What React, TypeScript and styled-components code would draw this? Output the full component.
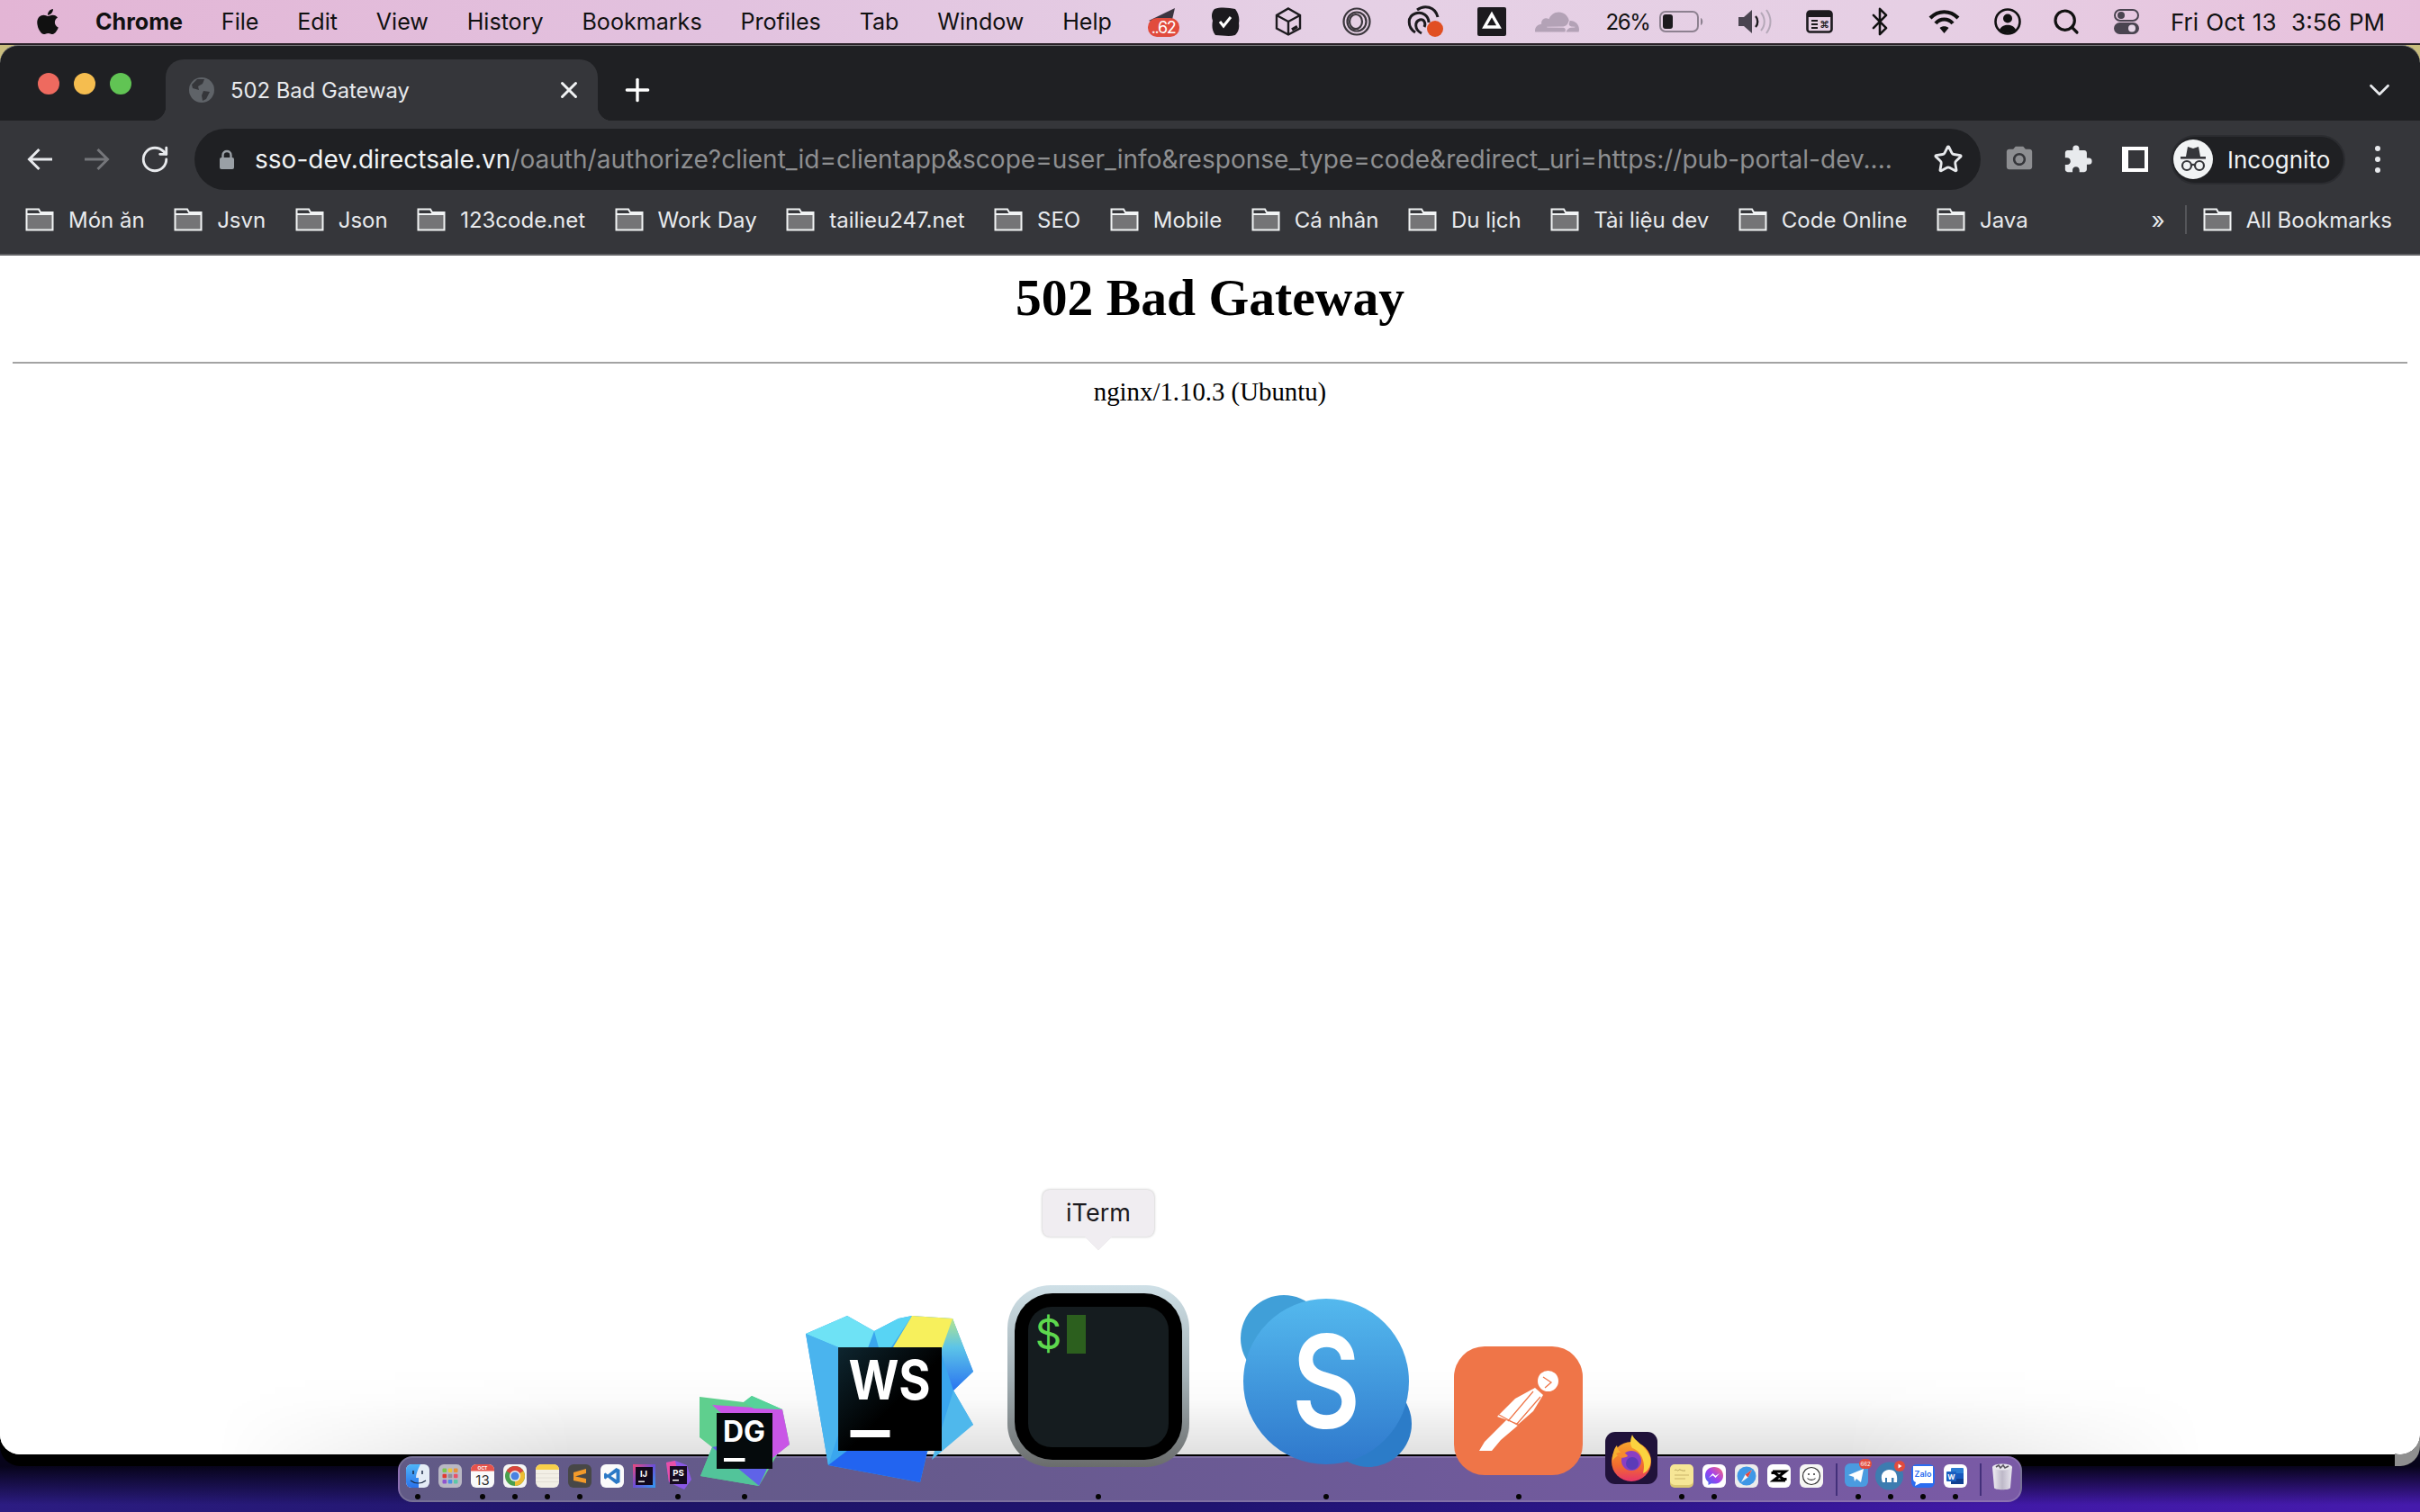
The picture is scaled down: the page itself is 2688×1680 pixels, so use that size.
import React from 'react';
import styled, { createGlobalStyle } from 'styled-components';
import { X, Plus, ChevronDown, RotateCw, Star, Search, Bluetooth } from 'lucide-react';
import { FaApple } from 'react-icons/fa';
import { MdExtension, MdPhotoCamera } from 'react-icons/md';
import { SiCloudflare } from 'react-icons/si';

const UI_FONT = `Inter, "Noto Sans", "Liberation Sans", sans-serif`;

const GlobalStyle = createGlobalStyle`
  html, body { margin: 0; padding: 0; background: #000; }
  * { box-sizing: border-box; }
`;

const Screen = styled.div`
  position: relative;
  width: 2688px;
  height: 1680px;
  overflow: hidden;
  font-family: ${UI_FONT};
  background:
    linear-gradient(to bottom, #c9bd7e 1600px, #07041a 1600px, #07041a 1629px, transparent 1672px),
    linear-gradient(90deg, #2c1c82 0%, #1e1468 28%, #1f1470 50%, #2b1688 66%, #4019a6 82%, #451aac 100%);
`;

/* ---------- mac menu bar ---------- */
const MenuBar = styled.header`
  height: 50px;
  border-bottom: 2px solid #2a2228;
  padding: 0 39px 0 37px;
  display: flex;
  align-items: center;
  background: linear-gradient(90deg, #e3b5d5 0%, #e2c2df 30%, #e5d0e5 55%, #e6cfe4 80%, #e7bfdb 100%);
  color: #111;
  font-size: 25.1px;
`;

const MenuList = styled.nav`
  display: flex;
  align-items: center;
  gap: 42.8px;
  margin-left: 37px;
`;

const MenuItem = styled.span<{ $bold?: boolean }>`
  font-weight: ${({ $bold }) => ($bold ? 700 : 400)};
`;

const Tray = styled.div`
  margin-left: auto;
  display: flex;
  align-items: center;
`;

const TraySlot = styled.span<{ $w: number; $ml: number }>`
  width: ${({ $w }) => $w}px;
  margin-left: ${({ $ml }) => $ml}px;
  display: flex;
  align-items: center;
  justify-content: center;
  white-space: nowrap;
  font-size: 24px;
  letter-spacing: -1.4px;

  svg { flex: none; }
`;

const Clock = styled.span`
  margin-left: 35px;
  font-size: 26px;
  word-spacing: 1px;
  white-space: nowrap;
`;

const TelegramStatus = () => (
  <svg width="37" height="36" viewBox="0 0 37 36">
    <path d="M2 17 L31 3 L27 20 L10 20 Z" fill="#3b3540" />
    <rect x="1" y="14" width="35" height="21" rx="10" fill="#e14b3d" />
    <text x="18" y="31" textAnchor="middle" fontSize="18" fill="#fff" fontFamily={UI_FONT}>..62</text>
  </svg>
);

const TaskStatus = () => (
  <svg width="32" height="32" viewBox="0 0 32 32">
    <path d="M4 2 C12 -1 21 1 27 2 C31 7 32 13 31 18 C32 24 30 28 27 31 C20 33 12 31 5 31 C1 26 1 20 2 15 C0 10 1 5 4 2Z" fill="#1c1a1e" />
    <path d="M10 16 L14 21 L22 11" stroke="#fff" strokeWidth="3" fill="none" />
  </svg>
);

const BoxStatus = () => (
  <svg width="30" height="32" viewBox="0 0 30 32" fill="none" stroke="#1c1a1e" strokeWidth="2.4">
    <path d="M15 1.5 L28 9 V23.5 L15 30.5 L2 23.5 V9 Z" />
    <path d="M2 9 L15 16 L28 9 M15 16 V30.5" />
    <path d="M19 25 L25 21.5" strokeWidth="3.4" />
  </svg>
);

const RingStatus = () => (
  <svg width="32" height="32" viewBox="0 0 32 32" fill="none" stroke="#3a363c" strokeWidth="2.2">
    <circle cx="16" cy="16" r="14.5" />
    <circle cx="16" cy="16" r="10.5" />
    <ellipse cx="15" cy="16" rx="7" ry="8" />
  </svg>
);

const SyncStatus = () => (
  <svg width="41" height="36" viewBox="0 0 41 36" fill="none" stroke="#1c1a1e" strokeWidth="3">
    <path d="M10 30 C1 24 1 12 10 9 C18 6 25 12 25 19" />
    <path d="M12 5 C20 -1 32 1 35 13" />
    <path d="M17 31 C9 27 9 18 15 16 C20 15 22 20 20 24" />
    <circle cx="32" cy="26" r="9" fill="#e14f22" stroke="none" />
  </svg>
);

const DriveStatus = () => (
  <svg width="32" height="32" viewBox="0 0 32 32">
    <rect width="32" height="32" rx="2" fill="#1c1a1e" />
    <path d="M16 8 L24 22 H8 Z" fill="none" stroke="#fff" strokeWidth="3.4" />
  </svg>
);

const BatteryStatus = () => (
  <svg width="50" height="24" viewBox="0 0 50 24">
    <rect x="1" y="1" width="42" height="22" rx="6" fill="none" stroke="#8d8190" strokeWidth="2" />
    <rect x="4" y="4" width="11" height="16" rx="3" fill="#1c1a1e" />
    <path d="M46 8 C49 9 49 15 46 16 Z" fill="#8d8190" />
  </svg>
);

const SpeakerStatus = () => (
  <svg width="38" height="30" viewBox="0 0 38 30">
    <path d="M1 10 H7 L16 2 V28 L7 20 H1 Z" fill="#4a4450" />
    <path d="M20 9 C23 12 23 18 20 21" stroke="#1c1a1e" strokeWidth="2.4" fill="none" />
    <path d="M26 5 C31 11 31 19 26 25" stroke="#b5a8b8" strokeWidth="2" fill="none" />
    <path d="M32 2 C38 10 38 20 32 28" stroke="#b5a8b8" strokeWidth="2" fill="none" />
  </svg>
);

const CommandStatus = () => (
  <svg width="30" height="26" viewBox="0 0 30 26">
    <rect x="1.5" y="1.5" width="27" height="23" rx="3" fill="none" stroke="#1c1a1e" strokeWidth="2.6" />
    <rect x="2" y="2" width="26" height="6" fill="#1c1a1e" />
    <path d="M6 12 H13 M6 16 H13 M6 20 H13" stroke="#1c1a1e" strokeWidth="1.8" />
    <text x="20" y="20" textAnchor="middle" fontSize="11" fontWeight="700" fill="#1c1a1e" fontFamily={UI_FONT}>⌘</text>
  </svg>
);

const WifiStatus = () => (
  <svg width="35" height="28" viewBox="0 0 35 28" fill="none" stroke="#111" strokeWidth="4.2">
    <path d="M2 10 C11 1 24 1 33 10" />
    <path d="M8 16 C13 10 22 10 27 16" />
    <path d="M17.5 27 L12.5 21 C15 18.5 20 18.5 22.5 21 Z" fill="#111" stroke="none" />
  </svg>
);

const UserStatus = () => (
  <svg width="30" height="30" viewBox="0 0 30 30">
    <circle cx="15" cy="15" r="13.5" fill="none" stroke="#111" strokeWidth="2.6" />
    <circle cx="15" cy="11.5" r="5" fill="#111" />
    <path d="M6 24 C9 17 21 17 24 24 C20 29 10 29 6 24Z" fill="#111" />
  </svg>
);

const ControlStatus = () => (
  <svg width="28" height="28" viewBox="0 0 28 28">
    <rect x="1" y="1" width="26" height="12" rx="6" fill="none" stroke="#4a4450" strokeWidth="2" />
    <circle cx="8" cy="7" r="4" fill="#4a4450" />
    <rect y="15" width="28" height="13" rx="6.5" fill="#4a4450" />
    <circle cx="20" cy="21.5" r="4" fill="#e7d6e7" />
  </svg>
);

/* ---------- browser window ---------- */
const BrowserWindow = styled.main`
  height: 1566px;
  display: flex;
  flex-direction: column;
  border-radius: 22px;
  box-shadow: 0 13px 0 #000;
  background: #fff;
  overflow: visible;
`;

const TabStrip = styled.div`
  height: 84px;
  display: flex;
  align-items: flex-end;
  padding-left: 42px;
  padding-right: 26px;
  background: #1f2023;
  border-top: 1px solid #77787a;
  border-radius: 20px 20px 0 0;
`;

const Lights = styled.div`
  align-self: flex-start;
  margin-top: 30px;
  display: flex;
  gap: 16px;
`;

const Light = styled.span<{ $color: string }>`
  width: 24px;
  height: 24px;
  border-radius: 50%;
  background: ${({ $color }) => $color};
`;

const Tab = styled.div`
  position: relative;
  margin-left: 38px;
  width: 480px;
  height: 68px;
  padding: 0 24px 0 26px;
  display: flex;
  align-items: center;
  gap: 18px;
  background: #35363a;
  border-radius: 20px 20px 0 0;
  color: #e8eaed;
  font-size: 23.8px;

  &::before, &::after {
    content: '';
    position: absolute;
    bottom: 0;
    width: 16px;
    height: 16px;
  }
  &::before {
    left: -16px;
    background: radial-gradient(circle at 0 0, transparent 16px, #35363a 16.5px);
  }
  &::after {
    right: -16px;
    background: radial-gradient(circle at 100% 0, transparent 16px, #35363a 16.5px);
  }
`;

const TabClose = styled.span`
  margin-left: auto;
  margin-right: -7px;
  display: flex;
  color: #f1f3f4;
`;

const NewTab = styled.span`
  margin-left: 24px;
  height: 68px;
  display: flex;
  align-items: center;
  color: #fff;
`;

const StripEnd = styled.span`
  margin-left: auto;
  height: 68px;
  display: flex;
  align-items: center;
  color: #e8eaed;
`;

const Toolbar = styled.div`
  height: 86px;
  display: flex;
  align-items: center;
  padding-left: 30px;
  background: #35363a;
`;

const ToolIcon = styled.span<{ $w: number; $ml?: number; $color?: string }>`
  width: ${({ $w }) => $w}px;
  margin-left: ${({ $ml = 0 }) => $ml}px;
  color: ${({ $color = '#e8eaed' }) => $color};
  display: flex;
  align-items: center;
  justify-content: center;
  flex: none;

  svg { flex: none; }
`;

const Omnibox = styled.div`
  margin-left: 30px;
  width: 1984px;
  height: 68px;
  border-radius: 34px;
  background: #1f2023;
  display: flex;
  align-items: center;
  padding: 0 21px 0 27px;
  flex: none;
`;

const UrlText = styled.div`
  margin-left: 22px;
  flex: 1;
  white-space: nowrap;
  overflow: hidden;
  font-size: 28px;
  letter-spacing: 0.02px;
  color: #8e8f91;
`;

const UrlHost = styled.span`
  color: #f1f3f4;
`;

const ProfilePill = styled.div`
  margin-left: 25px;
  width: 194px;
  height: 55px;
  padding-left: 1px;
  border-radius: 28px;
  background: #1f2023;
  border: 2px solid #2b2c30;
  display: flex;
  align-items: center;
  gap: 16px;
  color: #f1f3f4;
  font-size: 26px;
  flex: none;
`;

const MenuDots = styled.span`
  margin-left: 33px;
  display: flex;
  flex-direction: column;
  gap: 6px;

  i {
    width: 6px;
    height: 6px;
    border-radius: 50%;
    background: #e8eaed;
  }
`;

const BookmarkBar = styled.div`
  height: 64px;
  padding: 0 31px 14px 28px;
  display: flex;
  align-items: center;
  gap: 32.5px;
  background: #35363a;
  border-bottom: 2px solid #606164;
  color: #e8eaed;
  font-size: 24px;
  white-space: nowrap;
`;

const Bookmark = styled.span`
  display: flex;
  align-items: center;
  gap: 16px;
`;

const BookmarkEnd = styled.div`
  margin-left: auto;
  display: flex;
  align-items: center;
`;

const Chevrons = styled.span`
  font-size: 26px;
  color: #e8eaed;
`;

const BarDivider = styled.span`
  width: 2px;
  height: 32px;
  margin: 0 18px 0 22px;
  background: #55565a;
`;

const PageBody = styled.section`
  position: relative;
  flex: 1;
  padding: 14.4px;
  background: #fff;
  border-radius: 0 0 22px 22px;
  color: #000;
  font-family: "Liberation Serif", "Times New Roman", serif;
  font-size: 28.8px;
  overflow: hidden;
`;

const PageTitle = styled.h1`
  margin: 0 0 38.6px;
  text-align: center;
  font-size: 57.6px;
  font-weight: 700;
`;

const PageRule = styled.hr`
  margin: 0 0 15.4px;
  border: 0;
  height: 2px;
  background: #a3a3a3;
`;

const ServerLine = styled.div`
  text-align: center;
`;

const DockShelf = styled.div`
  position: absolute;
  left: 240px;
  right: 240px;
  bottom: 0;
  height: 96px;
  background: linear-gradient(to bottom, rgba(0, 0, 0, 0), rgba(0, 0, 0, 0.015) 35%, rgba(0, 0, 0, 0.12));
  -webkit-mask-image: linear-gradient(90deg, transparent, #000 18%, #000 82%, transparent);
  mask-image: linear-gradient(90deg, transparent, #000 18%, #000 82%, transparent);
`;

const CornerPeek = styled.div`
  position: absolute;
  left: 2660px;
  top: 1594px;
  width: 28px;
  height: 35px;
  border-bottom-right-radius: 22px;
  background: radial-gradient(circle 22px at 6px 0, transparent 21.5px, #8f8f8f 22px);
`;

/* ---------- dock ---------- */
const Dock = styled.footer`
  position: absolute;
  left: 442px;
  top: 1618px;
  width: 1804px;
  height: 51px;
  padding-left: 7px;
  display: flex;
  border: 2px solid rgba(255, 255, 255, 0.14);
  border-bottom-width: 2px;
  border-radius: 16px;
  background: linear-gradient(90deg, #615a86 0%, #675a8e 35%, #6d5a98 60%, #7a5aa6 100%);
`;

const DockSlot = styled.div<{ $w: number; $ml: number; $lift: number }>`
  position: relative;
  flex: none;
  width: ${({ $w }) => $w}px;
  margin-left: ${({ $ml }) => $ml}px;
  height: 100%;
  padding-bottom: ${({ $lift }) => $lift}px;
  display: flex;
  flex-direction: column;
  justify-content: flex-end;
  align-items: center;

  svg { flex: none; display: block; }
`;

const RunDot = styled.span`
  position: absolute;
  left: 50%;
  bottom: 1px;
  margin-left: -3px;
  width: 6px;
  height: 6px;
  border-radius: 50%;
  background: #050505;
`;

const DockDivider = styled.span`
  width: 2px;
  height: 36px;
  margin-top: 6px;
  margin-left: 14px;
  margin-right: 0;
  background: #43307a;
  flex: none;
`;

const Tooltip = styled.div`
  position: absolute;
  left: 714px;
  top: -298px;
  width: 124px;
  height: 52px;
  padding-bottom: 2px;
  border-radius: 8px;
  background: #f0edf1;
  box-shadow: 0 0 3px rgba(0, 0, 0, 0.3);
  color: #1c1a1e;
  font-size: 27px;
  display: flex;
  align-items: center;
  justify-content: center;

  &::after {
    content: '';
    position: absolute;
    left: 50%;
    bottom: -11px;
    width: 22px;
    height: 22px;
    margin-left: -11px;
    background: #f0edf1;
    transform: rotate(45deg);
    box-shadow: 1px 1px 2px rgba(0, 0, 0, 0.12);
    clip-path: polygon(100% 0, 100% 100%, 0 100%);
  }
`;

const Globe = () => (
  <svg width="28" height="28" viewBox="0 0 28 28">
    <circle cx="14" cy="14" r="14" fill="#5f6368" />
    <path d="M9 2 L17 2 L15 7 L10 10 L11 14 L4 12 L3 8 Z M16 15 L23 16 L19 24 L15 26 L14 20 Z" fill="#35363a" />
  </svg>
);

const BackArrow = ({ color }: { color: string }) => (
  <svg width="28" height="26" viewBox="0 0 28 26" fill="none" stroke={color} strokeWidth="3">
    <path d="M28 13 H3 M13.5 2 L2.5 13 L13.5 24" />
  </svg>
);

const ForwardArrow = ({ color }: { color: string }) => (
  <svg width="28" height="26" viewBox="0 0 28 26" fill="none" stroke={color} strokeWidth="3">
    <path d="M0 13 H25 M14.5 2 L25.5 13 L14.5 24" />
  </svg>
);

const LockIcon = () => (
  <svg width="18" height="22" viewBox="0 0 18 22">
    <path d="M4.5 10 V6.5 C4.5 0.5 13.5 0.5 13.5 6.5 V10" fill="none" stroke="#9aa0a6" strokeWidth="2.4" />
    <rect x="1" y="9" width="16" height="13" rx="2" fill="#9aa0a6" />
  </svg>
);

const SidePanel = () => (
  <svg width="29" height="28" viewBox="0 0 29 28">
    <rect width="29" height="28" fill="#fff" />
    <rect x="7" y="4" width="18" height="20" fill="#35363a" />
  </svg>
);

const IncognitoAvatar = () => (
  <svg width="44" height="44" viewBox="0 0 44 44">
    <circle cx="22" cy="22" r="22" fill="#f1f3f4" />
    <path d="M14 19 L16 8 L22 10 L28 8 L30 19 Z" fill="#35363a" />
    <rect x="8" y="19" width="28" height="2.6" fill="#35363a" />
    <circle cx="15" cy="29" r="5" fill="none" stroke="#35363a" strokeWidth="2.2" />
    <circle cx="29" cy="29" r="5" fill="none" stroke="#35363a" strokeWidth="2.2" />
    <path d="M20 28 H24" stroke="#35363a" strokeWidth="2.2" />
  </svg>
);

const FolderIcon = () => (
  <svg width="32" height="26" viewBox="0 0 32 26">
    <path d="M2 8 H30 V24 H2 Z" fill="#747476" />
    <path d="M1.5 24.5 V1.5 H15 L17 5 H30.5 V24.5 Z M1.5 7 H30.5" fill="none" stroke="#f1f3f4" strokeWidth="2" />
  </svg>
);

/* dock icons, drawn at their on-screen size */
const Finder = () => (
  <svg width="26" height="26" viewBox="0 0 26 26">
    <defs>
      <linearGradient id="finderBlue" x1="0" y1="0" x2="0" y2="1">
        <stop offset="0" stopColor="#4fb6f7" />
        <stop offset="1" stopColor="#2a72ea" />
      </linearGradient>
      <clipPath id="finderClip"><rect width="26" height="26" rx="6" /></clipPath>
    </defs>
    <g clipPath="url(#finderClip)">
      <rect width="26" height="26" fill="#e5ecf6" />
      <path d="M0 0 H16 C13 6 11 11 11 15 H14 V26 H0 Z" fill="url(#finderBlue)" />
      <path d="M8 7 V11 M18 7 V11" stroke="#1b2a44" strokeWidth="1.5" />
      <path d="M5 18 C10 22 17 22 22 18" stroke="#1b2a44" strokeWidth="1.2" fill="none" />
    </g>
  </svg>
);

const Launchpad = () => {
  const colors = ['#7ac74f', '#e9c33f', '#e8913a', '#e23b32', '#8f8f98', '#e8526a', '#8f55cf', '#4a8fe6', '#5cc8a8'];
  return (
    <svg width="26" height="26" viewBox="0 0 26 26">
      <rect width="26" height="26" rx="6" fill="#b9b8c4" />
      {colors.map((c, i) => (
        <rect key={c} x={4.5 + (i % 3) * 6.2} y={4.5 + Math.floor(i / 3) * 6.2} width="4.6" height="4.6" rx="1" fill={c} />
      ))}
    </svg>
  );
};

const CalendarIcon = () => (
  <svg width="26" height="26" viewBox="0 0 26 26">
    <defs><clipPath id="calClip"><rect width="26" height="26" rx="6" /></clipPath></defs>
    <g clipPath="url(#calClip)">
      <rect width="26" height="26" fill="#fafafa" />
      <rect width="26" height="7.5" fill="#e5534b" />
    </g>
    <text x="13" y="6" textAnchor="middle" fontSize="5" fontWeight="700" fill="#fff" fontFamily={UI_FONT}>OCT</text>
    <text x="13" y="22.5" textAnchor="middle" fontSize="15" fill="#333" fontFamily={UI_FONT}>13</text>
  </svg>
);

const ChromeIcon = () => (
  <svg width="26" height="26" viewBox="0 0 26 26">
    <rect width="26" height="26" rx="6" fill="#f5f5f5" />
    <circle cx="13" cy="13" r="11" fill="#4a9f4f" />
    <path d="M13 13 L3.5 7.5 A11 11 0 0 1 22.5 7.5 Z" fill="#d9453b" />
    <path d="M13 13 L22.5 7.5 A11 11 0 0 1 13 24 Z" fill="#eebb33" />
    <circle cx="13" cy="13" r="6" fill="#f5f5f5" />
    <circle cx="13" cy="13" r="4.6" fill="#4a82e0" />
  </svg>
);

const NotesIcon = () => (
  <svg width="26" height="26" viewBox="0 0 26 26">
    <defs><clipPath id="noteClip"><rect width="26" height="26" rx="6" /></clipPath></defs>
    <g clipPath="url(#noteClip)">
      <rect width="26" height="26" fill="#f2efe6" />
      <rect width="26" height="6" fill="#f8cf4a" />
      <path d="M0 10.5 H26 M0 15 H26 M0 19.5 H26" stroke="#dedad0" strokeWidth="0.8" />
    </g>
  </svg>
);

const SublimeIcon = () => (
  <svg width="26" height="26" viewBox="0 0 26 26">
    <rect width="26" height="26" rx="6" fill="#474747" />
    <path d="M20 5 V10 L6 14 V9 Z M6 13 L20 16 V21 L6 18 Z" fill="#f29a2a" />
  </svg>
);

const VsCodeIcon = () => (
  <svg width="26" height="26" viewBox="0 0 26 26">
    <rect width="26" height="26" rx="6" fill="#fbfbfb" />
    <path d="M17.5 4 L21.5 6 V20 L17.5 22 L8 14.5 L5.5 16.5 L4 15.5 V10.5 L5.5 9.5 L8 11.5 Z M17.5 9 L11.5 13 L17.5 17 Z" fill="#2b79c6" />
  </svg>
);

const IntellijIcon = () => (
  <svg width="25" height="26" viewBox="0 0 25 26">
    <defs>
      <linearGradient id="ijGrad" x1="0" y1="0" x2="1" y2="1">
        <stop offset="0" stopColor="#f0487a" />
        <stop offset="0.5" stopColor="#6a4fd8" />
        <stop offset="1" stopColor="#2f9cf0" />
      </linearGradient>
    </defs>
    <rect width="25" height="26" fill="url(#ijGrad)" />
    <rect x="3" y="3" width="19" height="20" fill="#12081c" />
    <text x="12" y="13.5" textAnchor="middle" fontSize="9.5" fontWeight="700" fill="#fff" fontFamily={UI_FONT}>IJ</text>
    <rect x="6" y="18.5" width="7" height="1.4" fill="#fff" />
  </svg>
);

const PhpStormIcon = () => (
  <svg width="30" height="32" viewBox="0 0 30 32">
    <path d="M2 2 L12 0 L25 5 L30 21 L22 32 L5 24 Z" fill="#8a58e6" />
    <path d="M2 2 L12 0 L14 10 L5 24 Z" fill="#e84fa8" />
    <rect x="6" y="6" width="19" height="20" fill="#150a20" />
    <text x="15.5" y="16.5" textAnchor="middle" fontSize="9.5" fontWeight="700" fill="#fff" fontFamily={UI_FONT}>PS</text>
    <rect x="9" y="21" width="7" height="1.4" fill="#fff" />
  </svg>
);

const DataGripIcon = () => (
  <svg width="100" height="100" viewBox="0 0 100 100">
    <path d="M0 1 L49 7 L58 0 L92 15 L100 54 L87 64 L66 100 L1 89 L14 57 L0 46 Z" fill="#5fcf8e" />
    <path d="M14 10 L92 15 L100 54 L80 70 Z" fill="#c956e6" />
    <path d="M49 7 L58 0 L92 15 L60 14 Z" fill="#56d39a" />
    <path d="M14 57 L66 100 L80 70 L50 50 Z" fill="#5f63e8" />
    <path d="M1 89 L14 57 L66 100 Z" fill="#52c49a" />
    <rect x="19" y="19" width="62" height="62" fill="#050a0c" />
    <text x="49.5" y="51" textAnchor="middle" fontSize="32" fontWeight="700" fill="#fff" fontFamily={UI_FONT} textLength="47" lengthAdjust="spacingAndGlyphs">DG</text>
    <rect x="27" y="69" width="23.5" height="4" fill="#fff" />
  </svg>
);

const WebStormIcon = () => (
  <svg width="186" height="185" viewBox="0 0 186 185">
    <defs>
      <linearGradient id="wsBox" x1="0" y1="0" x2="1" y2="1">
        <stop offset="0" stopColor="#0e2630" />
        <stop offset="0.55" stopColor="#000" />
      </linearGradient>
      <linearGradient id="wsRight" x1="0" y1="0" x2="0" y2="1">
        <stop offset="0" stopColor="#b4e48c" />
        <stop offset="0.4" stopColor="#5cc4e8" />
        <stop offset="1" stopColor="#2a74f0" />
      </linearGradient>
    </defs>
    <path d="M0 20 L46 0 L76 17 L103 3 L118 0 L163 3 L186 62 L164 83 L186 121 L135 151 L127 185 L25 166 Z" fill="#3aa6ee" />
    <path d="M0 20 L46 0 L76 17 L60 60 L36 35 Z" fill="#6ee2f5" />
    <path d="M0 20 L36 35 L40 120 L25 166 Z" fill="#4ab4ee" />
    <path d="M76 17 L103 3 L118 0 L85 50 Z" fill="#58d4f4" />
    <path d="M118 0 L163 3 L172 35 L120 40 L88 50 Z" fill="#f7f05c" />
    <path d="M163 3 L186 62 L164 83 L150 40 Z" fill="url(#wsRight)" />
    <path d="M164 83 L186 121 L140 160 Z" fill="#4fb8ec" />
    <path d="M25 166 L127 185 L135 151 L85 120 Z" fill="#2264f0" />
    <rect x="36" y="35" width="115" height="115" fill="url(#wsBox)" />
    <text x="93" y="93" textAnchor="middle" fontSize="60" fontWeight="700" fill="#fff" fontFamily={UI_FONT} textLength="91" lengthAdjust="spacingAndGlyphs">WS</text>
    <rect x="49.5" y="127" width="44" height="8" fill="#fff" />
  </svg>
);

const ItermIcon = () => (
  <svg width="202" height="202" viewBox="0 0 202 202">
    <defs>
      <linearGradient id="itermFrame" x1="0" y1="0" x2="0" y2="1">
        <stop offset="0" stopColor="#cfe0e7" />
        <stop offset="0.5" stopColor="#a3b0b5" />
        <stop offset="1" stopColor="#6a6c6c" />
      </linearGradient>
    </defs>
    <rect width="202" height="202" rx="48" fill="url(#itermFrame)" />
    <rect x="8" y="9" width="186" height="185" rx="42" fill="#000" />
    <rect x="23" y="24" width="156" height="156" rx="26" fill="#151c1f" />
    <text x="45.5" y="71" textAnchor="middle" fontSize="46" fontWeight="400" fill="#5ed84e" fontFamily={UI_FONT}>$</text>
    <rect x="66" y="33" width="21" height="43" fill="#2c5f1e" />
  </svg>
);

const SkypeIcon = () => (
  <svg width="190" height="191" viewBox="0 0 190 191">
    <defs>
      <linearGradient id="skypeFace" x1="0" y1="0" x2="0" y2="1">
        <stop offset="0" stopColor="#54b9ee" />
        <stop offset="1" stopColor="#2f78cc" />
      </linearGradient>
    </defs>
    <circle cx="48" cy="48" r="48" fill="#409fd8" />
    <circle cx="142" cy="143" r="48" fill="#2c7cc8" />
    <circle cx="95" cy="96" r="92" fill="url(#skypeFace)" />
    <text x="95" y="147" textAnchor="middle" fontSize="142" fontWeight="600" fill="#fff" fontFamily={UI_FONT} textLength="76" lengthAdjust="spacingAndGlyphs">S</text>
  </svg>
);

const PostmanIcon = () => (
  <svg width="143" height="143" viewBox="0 0 143 143">
    <rect width="143" height="143" rx="34" fill="#ef7548" />
    <circle cx="104.5" cy="38.5" r="11.5" fill="#fff" />
    <path d="M99 34 L108 40 L101 46" stroke="#ef7548" strokeWidth="1.3" fill="none" />
    <path d="M90 46 L99 54 L88 72 L72 86 L48 78 L68 58 Z" fill="#fff" />
    <path d="M58 82 L72 87 L52 104 L42 116 L28 116 L34 106 Z" fill="#fff" />
    <path d="M88 50 L60 83 M96 56 L70 86 M50 76 L72 88" stroke="#ef7548" strokeWidth="1.2" />
  </svg>
);

const FirefoxIcon = () => (
  <svg width="58" height="58" viewBox="0 0 58 58">
    <defs>
      <linearGradient id="foxRing" x1="0" y1="0" x2="0" y2="1">
        <stop offset="0" stopColor="#f9a52c" />
        <stop offset="0.6" stopColor="#f26b2e" />
        <stop offset="1" stopColor="#e6356a" />
      </linearGradient>
    </defs>
    <rect width="58" height="58" rx="11" fill="#20123a" />
    <circle cx="29" cy="33" r="22" fill="url(#foxRing)" />
    <path d="M30 3 C32 10 44 14 50 28 C52 36 48 44 42 46 C46 32 38 20 30 18 C27 13 28 8 30 3Z" fill="#fbd33f" />
    <path d="M8 32 C8 24 10 18 13 15 C14 20 16 22 19 24 C14 26 11 28 8 32Z" fill="#f9b12f" />
    <circle cx="29" cy="32" r="11" fill="#8a3fc4" />
    <circle cx="30" cy="35" r="7" fill="#5b3bb8" />
    <path d="M12 24 C18 21 24 24 25 27 C20 30 15 29 12 24Z" fill="#f88a2e" />
  </svg>
);

const StickiesIcon = () => (
  <svg width="26" height="26" viewBox="0 0 26 26">
    <rect y="2" width="26" height="24" rx="5" fill="#dcc873" />
    <rect width="26" height="23" rx="5" fill="#f6e696" />
    <path d="M5 7 C7 4 8 9 10 6 C11 5 13 8 17 7" stroke="#b8a45c" strokeWidth="1" fill="none" />
    <path d="M5 12 H21 M5 16 H17" stroke="#c9b469" strokeWidth="1.2" />
  </svg>
);

const MessengerIcon = () => (
  <svg width="26" height="26" viewBox="0 0 26 26">
    <defs>
      <linearGradient id="msgGrad" x1="0" y1="1" x2="1" y2="0">
        <stop offset="0" stopColor="#3a6cf0" />
        <stop offset="0.5" stopColor="#a040f0" />
        <stop offset="1" stopColor="#ff6a70" />
      </linearGradient>
    </defs>
    <rect width="26" height="26" rx="6" fill="#fff" />
    <path d="M13 3 C7 3 3 7 3 12.5 C3 15.5 4.2 18 6.5 19.5 V23 L10 21.2 C11 21.5 12 21.6 13 21.6 C19 21.6 23 17.6 23 12.4 C23 7 19 3 13 3Z" fill="url(#msgGrad)" />
    <path d="M7 15 L11.5 10 L14.5 12.8 L19 10 L14.5 15 L11.5 12.3 Z" fill="#fff" />
  </svg>
);

const SafariIcon = () => (
  <svg width="26" height="26" viewBox="0 0 26 26">
    <rect width="26" height="26" rx="6" fill="#ececec" />
    <circle cx="13" cy="13" r="10.5" fill="#3f97e6" />
    <path d="M19 6 L14.5 14.5 L7 20 L11.5 11.5 Z" fill="#f4f4f4" />
    <path d="M19 6 L14.5 14.5 L11.5 11.5 Z" fill="#e5483d" />
  </svg>
);

const CapCutIcon = () => (
  <svg width="26" height="26" viewBox="0 0 26 26">
    <rect width="26" height="26" rx="6" fill="#fff" />
    <path d="M6 8 H20 L7 18 H20 M6 8 L20 18 M6 8 V11 M20 15 V18" stroke="#000" strokeWidth="3" fill="none" />
  </svg>
);

const FaceIcon = () => (
  <svg width="26" height="26" viewBox="0 0 26 26">
    <rect width="26" height="26" rx="6" fill="#f6f6f4" />
    <circle cx="13" cy="13" r="9.5" fill="#fff" stroke="#333" strokeWidth="1.2" />
    <circle cx="10" cy="11" r="1" fill="#333" />
    <circle cx="16" cy="11" r="1" fill="#333" />
    <path d="M8.5 15.5 C10.5 18 15.5 18 17.5 15.5" stroke="#333" strokeWidth="1.1" fill="none" />
  </svg>
);

const TelegramDock = () => (
  <svg width="30" height="32" viewBox="0 0 30 32" style={{ overflow: 'visible' }}>
    <rect x="0" y="5" width="26" height="26" rx="6" fill="#4a9be0" />
    <path d="M4 18 L21 11 L18 26 L13 22 L11 25 L10 20 Z" fill="#fff" />
    <rect x="16" y="0" width="14" height="11" rx="5.5" fill="#e14b3d" />
    <text x="23" y="8" textAnchor="middle" fontSize="6" fill="#fff" fontFamily={UI_FONT}>662</text>
  </svg>
);

const MampDock = () => (
  <svg width="33" height="33" viewBox="0 0 33 33" style={{ overflow: 'visible' }}>
    <circle cx="15.5" cy="17" r="15.5" fill="#3d7cb0" />
    <path d="M8 24 C5 16 8 11 15 10 C22 10 25 14 24 24 H20.5 V19 H18 V24 H13 V19 H11 V24 Z" fill="#fff" />
    <circle cx="27" cy="6" r="6" fill="#e14b3d" />
    <path d="M25.5 3.5 L29.5 6 L25.5 8.5 Z" fill="#fff" />
  </svg>
);

const ZaloDock = () => (
  <svg width="26" height="27" viewBox="0 0 26 27">
    <rect width="26" height="26" rx="6" fill="#2a6cf0" />
    <path d="M2 2 H24 V21 H10 L4 24 L5 20 C3 19 2 18 2 16 Z" fill="#fff" />
    <text x="13" y="14" textAnchor="middle" fontSize="9" fontWeight="600" fill="#2a6cf0" fontFamily={UI_FONT}>Zalo</text>
  </svg>
);

const WordDock = () => (
  <svg width="26" height="26" viewBox="0 0 26 26">
    <rect width="26" height="26" rx="6" fill="#fff" />
    <rect x="8" y="4" width="14" height="18" rx="1" fill="#2b7cd3" />
    <rect x="8" y="10" width="14" height="6" fill="#185abd" />
    <rect x="8" y="16" width="14" height="6" fill="#103f91" />
    <rect x="3" y="8" width="11" height="11" rx="1" fill="#1a5fc0" />
    <text x="8.5" y="16.5" textAnchor="middle" fontSize="8" fontWeight="700" fill="#fff" fontFamily={UI_FONT}>W</text>
  </svg>
);

const TrashDock = () => (
  <svg width="24" height="30" viewBox="0 0 24 30">
    <defs>
      <linearGradient id="trashGrad" x1="0" y1="0" x2="1" y2="0">
        <stop offset="0" stopColor="#f2f0f5" />
        <stop offset="0.5" stopColor="#bdb8c8" />
        <stop offset="1" stopColor="#e8e6ee" />
      </linearGradient>
    </defs>
    <path d="M1 4 H23 L21 27 C21 30 3 30 3 27 Z" fill="url(#trashGrad)" />
    <ellipse cx="12" cy="4" rx="11" ry="3.5" fill="#e9e7ee" />
    <path d="M5 4 L8 2 L10 5 L13 2 L15 5 L19 3" stroke="#5a5560" strokeWidth="1.6" fill="none" />
  </svg>
);

type DockEntry = { id: string; w: number; ml: number; lift: number; dot?: boolean; icon: React.ReactNode };

const leftDock: DockEntry[] = [
  { id: 'finder', w: 26, ml: 0, lift: 14, dot: true, icon: <Finder /> },
  { id: 'launchpad', w: 26, ml: 10, lift: 14, icon: <Launchpad /> },
  { id: 'calendar', w: 26, ml: 10, lift: 14, dot: true, icon: <CalendarIcon /> },
  { id: 'chrome', w: 26, ml: 10, lift: 14, dot: true, icon: <ChromeIcon /> },
  { id: 'notes', w: 26, ml: 10, lift: 14, dot: true, icon: <NotesIcon /> },
  { id: 'sublime', w: 26, ml: 10, lift: 14, dot: true, icon: <SublimeIcon /> },
  { id: 'vscode', w: 26, ml: 10, lift: 14, icon: <VsCodeIcon /> },
  { id: 'intellij', w: 25, ml: 10, lift: 14, icon: <IntellijIcon /> },
  { id: 'phpstorm', w: 30, ml: 10, lift: 12, dot: true, icon: <PhpStormIcon /> },
  { id: 'datagrip', w: 100, ml: 9, lift: 16, dot: true, icon: <DataGripIcon /> },
  { id: 'webstorm', w: 186, ml: 18, lift: 20, icon: <WebStormIcon /> },
  { id: 'iterm', w: 202, ml: 38, lift: 37, dot: true, icon: <ItermIcon /> },
  { id: 'skype', w: 190, ml: 57, lift: 37, dot: true, icon: <SkypeIcon /> },
  { id: 'postman', w: 143, ml: 47, lift: 28, dot: true, icon: <PostmanIcon /> },
  { id: 'firefox', w: 58, ml: 25, lift: 18, icon: <FirefoxIcon /> },
  { id: 'stickies', w: 26, ml: 14, lift: 14, dot: true, icon: <StickiesIcon /> },
  { id: 'messenger', w: 26, ml: 10, lift: 14, dot: true, icon: <MessengerIcon /> },
  { id: 'safari', w: 26, ml: 10, lift: 14, icon: <SafariIcon /> },
  { id: 'capcut', w: 26, ml: 10, lift: 14, icon: <CapCutIcon /> },
  { id: 'face', w: 26, ml: 10, lift: 14, icon: <FaceIcon /> },
];

const rightDock: DockEntry[] = [
  { id: 'telegram', w: 26, ml: 10, lift: 14, dot: true, icon: <TelegramDock /> },
  { id: 'mamp', w: 31, ml: 7, lift: 11, dot: true, icon: <MampDock /> },
  { id: 'zalo', w: 26, ml: 8, lift: 13, dot: true, icon: <ZaloDock /> },
  { id: 'word', w: 26, ml: 10, lift: 14, dot: true, icon: <WordDock /> },
];

const renderSlot = ({ id, w, ml, lift, dot, icon }: DockEntry) => (
  <DockSlot key={id} $w={w} $ml={ml} $lift={lift}>
    {icon}
    {dot && <RunDot />}
  </DockSlot>
);

const menus = ['File', 'Edit', 'View', 'History', 'Bookmarks', 'Profiles', 'Tab', 'Window', 'Help'];
const bookmarks = ['Món ăn', 'Jsvn', 'Json', '123code.net', 'Work Day', 'tailieu247.net', 'SEO', 'Mobile', 'Cá nhân', 'Du lịch', 'Tài liệu dev', 'Code Online', 'Java'];

const App = (): JSX.Element => (
  <Screen>
    <GlobalStyle />
    <MenuBar>
      <FaApple size={32} />
      <MenuList>
        <MenuItem $bold>Chrome</MenuItem>
        {menus.map((m) => <MenuItem key={m}>{m}</MenuItem>)}
      </MenuList>
      <Tray>
        <TraySlot $w={37} $ml={0}><TelegramStatus /></TraySlot>
        <TraySlot $w={32} $ml={34}><TaskStatus /></TraySlot>
        <TraySlot $w={30} $ml={39}><BoxStatus /></TraySlot>
        <TraySlot $w={32} $ml={45}><RingStatus /></TraySlot>
        <TraySlot $w={41} $ml={39}><SyncStatus /></TraySlot>
        <TraySlot $w={32} $ml={38}><DriveStatus /></TraySlot>
        <TraySlot $w={49} $ml={32}><SiCloudflare size={49} color="#b3a2b6" /></TraySlot>
        <TraySlot $w={48} $ml={30}>26%</TraySlot>
        <TraySlot $w={50} $ml={11}><BatteryStatus /></TraySlot>
        <TraySlot $w={38} $ml={37}><SpeakerStatus /></TraySlot>
        <TraySlot $w={30} $ml={38}><CommandStatus /></TraySlot>
        <TraySlot $w={19} $ml={43}><Bluetooth size={34} strokeWidth={1.8} /></TraySlot>
        <TraySlot $w={35} $ml={44}><WifiStatus /></TraySlot>
        <TraySlot $w={30} $ml={38}><UserStatus /></TraySlot>
        <TraySlot $w={28} $ml={36}><Search size={32} strokeWidth={2.4} /></TraySlot>
        <TraySlot $w={28} $ml={39}><ControlStatus /></TraySlot>
        <Clock>Fri Oct 13&nbsp;&nbsp;3:56 PM</Clock>
      </Tray>
    </MenuBar>

    <BrowserWindow>
      <TabStrip>
        <Lights>
          <Light $color="#ee6a5f" />
          <Light $color="#f5bd4f" />
          <Light $color="#61c454" />
        </Lights>
        <Tab>
          <Globe />
          <span>502 Bad Gateway</span>
          <TabClose><X size={30} strokeWidth={2.4} /></TabClose>
        </Tab>
        <NewTab><Plus size={40} strokeWidth={2} /></NewTab>
        <StripEnd><ChevronDown size={38} strokeWidth={1.7} /></StripEnd>
      </TabStrip>

      <Toolbar>
        <ToolIcon $w={28}><BackArrow color="#e8eaed" /></ToolIcon>
        <ToolIcon $w={28} $ml={36}><ForwardArrow color="#75767a" /></ToolIcon>
        <ToolIcon $w={28} $ml={36}><RotateCw size={34} strokeWidth={2} /></ToolIcon>
        <Omnibox>
          <LockIcon />
          <UrlText>
            <UrlHost>sso-dev.directsale.vn</UrlHost>/oauth/authorize?client_id=clientapp&amp;scope=user_info&amp;response_type=code&amp;redirect_uri=https://pub-portal-dev....
          </UrlText>
          <ToolIcon $w={30}><Star size={34} strokeWidth={2} /></ToolIcon>
        </Omnibox>
        <ToolIcon $w={30} $ml={28} $color="#8d8e91"><MdPhotoCamera size={34} /></ToolIcon>
        <ToolIcon $w={29} $ml={35}><MdExtension size={34} /></ToolIcon>
        <ToolIcon $w={29} $ml={35}><SidePanel /></ToolIcon>
        <ProfilePill>
          <IncognitoAvatar />
          <span>Incognito</span>
        </ProfilePill>
        <MenuDots><i /><i /><i /></MenuDots>
      </Toolbar>

      <BookmarkBar>
        {bookmarks.map((b) => (
          <Bookmark key={b}><FolderIcon />{b}</Bookmark>
        ))}
        <BookmarkEnd>
          <Chevrons>»</Chevrons>
          <BarDivider />
          <Bookmark><FolderIcon />All Bookmarks</Bookmark>
        </BookmarkEnd>
      </BookmarkBar>

      <PageBody>
        <PageTitle>502 Bad Gateway</PageTitle>
        <PageRule />
        <ServerLine>nginx/1.10.3 (Ubuntu)</ServerLine>
        <DockShelf />
      </PageBody>
    </BrowserWindow>

    <CornerPeek />

    <Dock>
      {leftDock.map(renderSlot)}
      <DockDivider />
      {rightDock.map(renderSlot)}
      <DockDivider />
      <DockSlot $w={24} $ml={11} $lift={11}><TrashDock /></DockSlot>
      <Tooltip>iTerm</Tooltip>
    </Dock>
  </Screen>
);

export default App;
